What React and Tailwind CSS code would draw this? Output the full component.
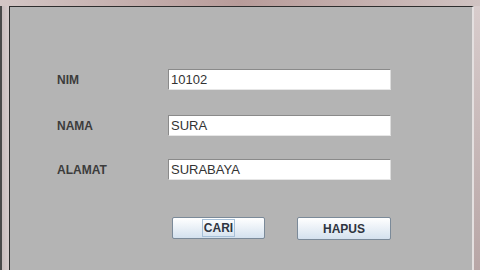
export default function App() {
  const rows = [
    { label: "NIM", value: "10102", mt: "mt-0" },
    { label: "NAMA", value: "SURA", mt: "mt-[25px]" },
    { label: "ALAMAT", value: "SURABAYA", mt: "mt-[23px]" },
  ];
  return (
    <div
      className="w-[480px] h-[270px] overflow-hidden flex flex-col bg-[#c6b8b7]"
      style={{ fontFamily: '"Liberation Sans", Arial, sans-serif' }}
    >
      <div className="h-[6px] bg-gradient-to-r from-[#d3c6c5] via-[#b89c9a] to-[#d0c3c2]" />
      <div className="flex flex-1">
        <div className="w-[2px] bg-[#4a4a4a]" />
        <div className="w-[7px] bg-gradient-to-r from-[#c8bcbc] to-[#d6cccc]" />
        <div className="flex-1 flex flex-col bg-[#b4b4b4] border-l border-t border-[#2e2e2e] border-r-2 border-r-[#e4e0e0] pt-[62px] pl-[47px]">
          {rows.map((r) => (
            <div key={r.label} className={`flex items-center h-[21px] ${r.mt}`}>
              <div className="w-[111px] text-[12px] font-bold text-[#3c3c3c] leading-none">
                {r.label}
              </div>
              <div className="w-[223px] h-[21px] bg-white border border-t-[#8a8a8a] border-l-[#8a8a8a] border-r-[#dcdcdc] border-b-[#e6e6e6] flex items-center pl-[2px] text-[13px] text-[#333] leading-none">
                {r.value}
              </div>
            </div>
          ))}
          <div className="flex mt-[37px] pl-[115px] gap-[32px]">
            <button className="w-[93px] h-[22px] border border-[#7b8a99] rounded-[2px] bg-gradient-to-b from-[#ffffff] to-[#d4e1ee] flex items-center justify-center">
              <span className="border border-[#a7c0d8] px-[1px] h-[18px] flex items-center text-[12px] font-bold text-[#2e3440] leading-none">
                CARI
              </span>
            </button>
            <button className="w-[94px] h-[23px] border border-[#7b8a99] rounded-[2px] bg-gradient-to-b from-[#ffffff] to-[#d4e1ee] flex items-center justify-center text-[12px] font-bold text-[#2e3440] leading-none">
              HAPUS
            </button>
          </div>
        </div>
        <div className="w-[6px] bg-gradient-to-b from-[#d8cccc] to-[#b8a6a6]" />
      </div>
    </div>
  );
}
